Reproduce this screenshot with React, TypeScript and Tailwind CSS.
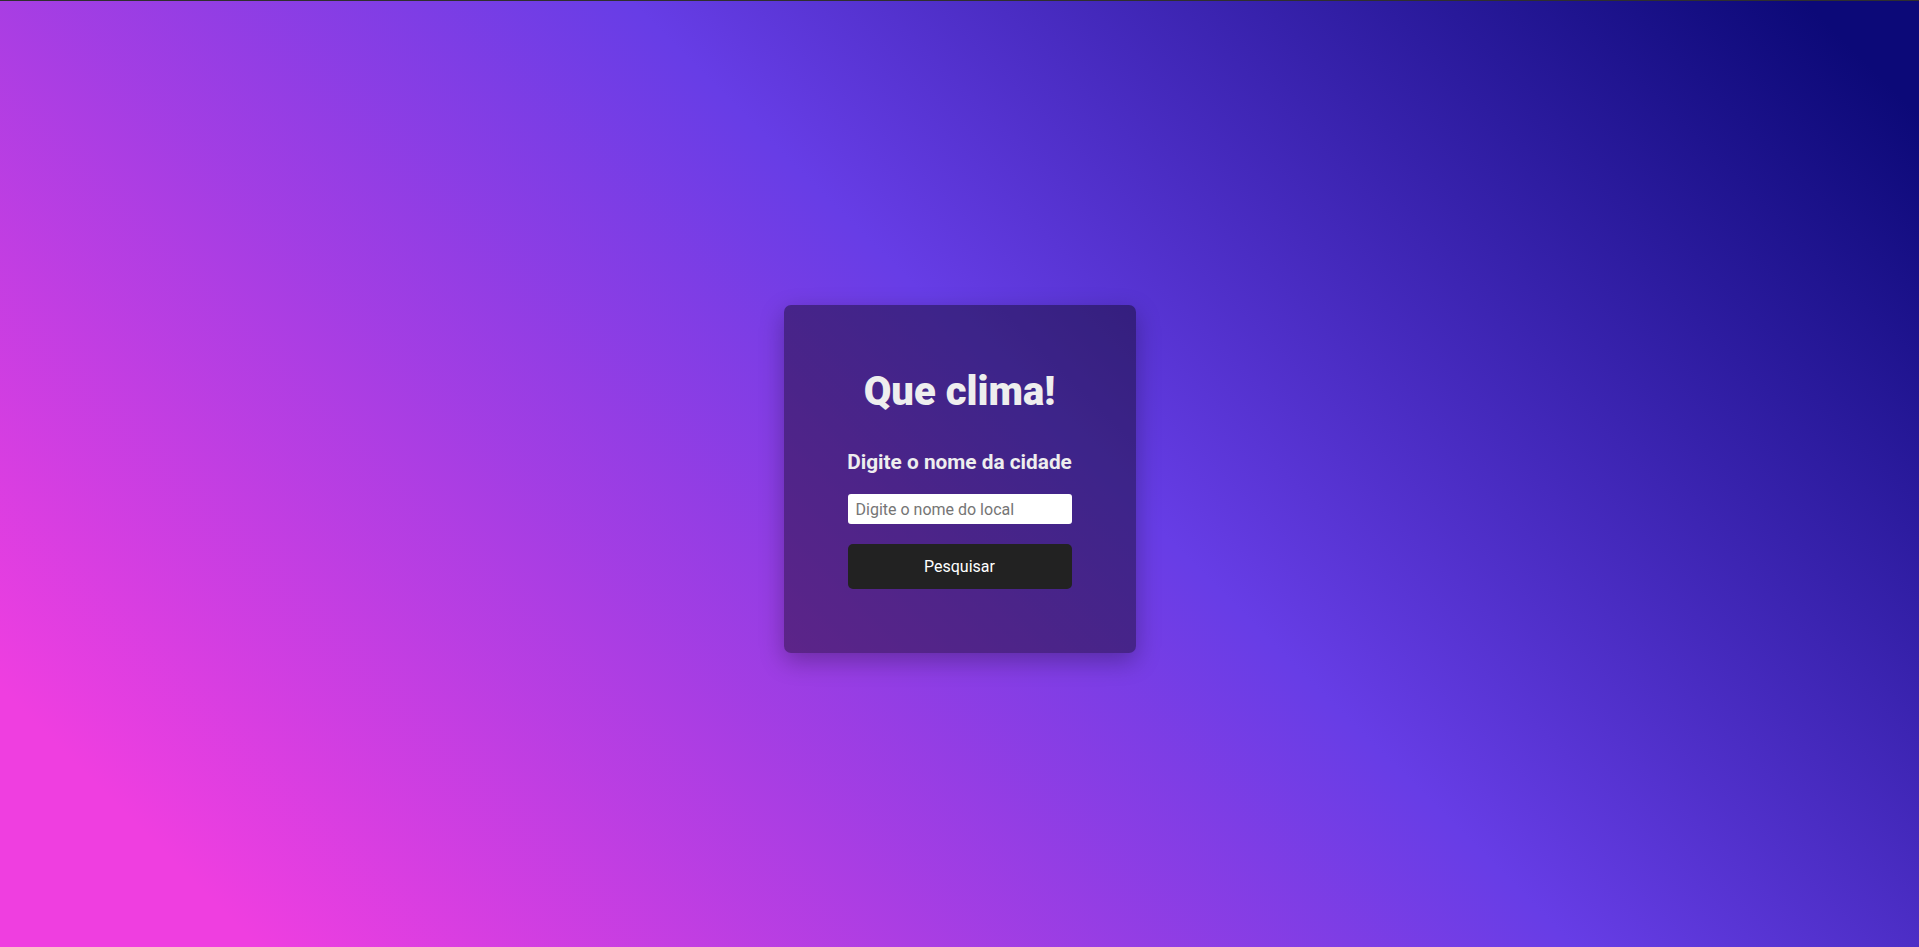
import React from "react";

export default function App() {
  return (
    <div
      className="w-full h-[947px] border-t border-[#2f2f2f] pt-[10px] flex items-center justify-center bg-[linear-gradient(45deg,#ef3ee0_9%,#673de6_55%,#0c0978_96%)]"
      style={{ fontFamily: "Roboto, 'Noto Sans', sans-serif" }}
    >
      <div className="w-[352px] h-[348px] rounded-[7px] bg-[rgba(0,0,0,0.4)] shadow-[0_8px_24px_rgba(0,0,0,0.28)] px-16 pt-[63px] flex flex-col items-center text-[#eeeeee]">
        <h1 className="text-[40px] leading-[47px] font-black whitespace-nowrap">Que clima!</h1>
        <h3 className="mt-[35px] text-[20.8px] leading-[24px] font-bold whitespace-nowrap">Digite o nome da cidade</h3>
        <input
          type="text"
          placeholder="Digite o nome do local"
          className="mt-[20px] w-[224px] h-[30px] rounded-[3px] bg-white px-2 text-[16px] text-[#222] placeholder:text-[#757575] outline-none border-0"
        />
        <button className="mt-[20px] w-[224px] h-[45px] rounded-[5px] bg-[#222222] text-white text-[16px]">
          Pesquisar
        </button>
      </div>
    </div>
  );
}
